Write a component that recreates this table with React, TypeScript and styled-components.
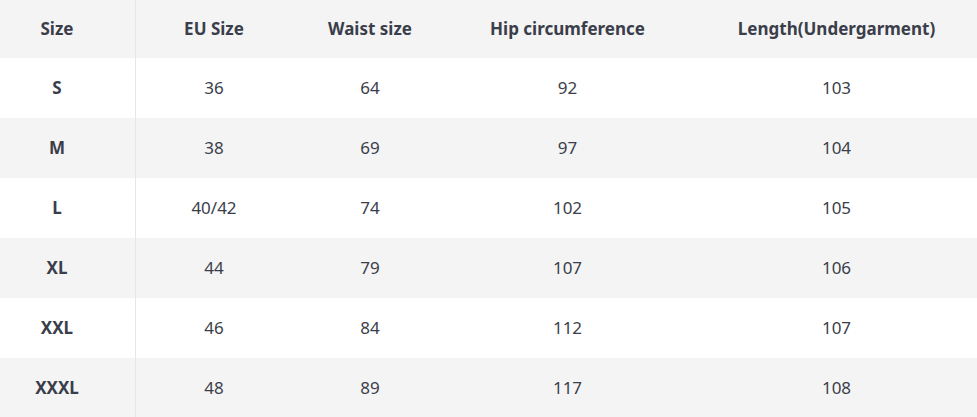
import styled, { createGlobalStyle } from 'styled-components'

const GlobalStyle = createGlobalStyle`
  html, body {
    margin: 0;
    padding: 0;
    background: #fff;
  }
  body {
    font-family: 'Noto Sans', 'Open Sans', sans-serif;
    color: #3a3e4a;
    overflow: hidden;
  }
`

const columns = ['Size', 'EU Size', 'Waist size', 'Hip circumference', 'Length(Undergarment)']

const rows = [
  ['S', '36', '64', '92', '103'],
  ['M', '38', '69', '97', '104'],
  ['L', '40/42', '74', '102', '105'],
  ['XL', '44', '79', '107', '106'],
  ['XXL', '46', '84', '112', '107'],
  ['XXXL', '48', '89', '117', '108'],
]

const Table = styled.div`
  display: grid;
  grid-template-columns: 136px 156px 156px 239px 299px;
  width: 986px;
`

const Row = styled.div<{ $shaded: boolean; $head?: boolean }>`
  display: contents;

  & > div {
    background: ${(p) => (p.$shaded ? '#f4f4f4' : '#ffffff')};
    height: ${(p) => (p.$head ? '58px' : '60px')};
  }
`

const Cell = styled.div<{ $bold?: boolean; $first?: boolean }>`
  display: flex;
  align-items: center;
  justify-content: center;
  box-sizing: border-box;
  font-size: 17px;
  font-weight: ${(p) => (p.$bold ? 700 : 400)};
  padding-right: ${(p) => (p.$first ? '21px' : '0')};
  padding-bottom: 1px;
  border-right: ${(p) => (p.$first ? '1px solid #e6e6e6' : 'none')};
  white-space: nowrap;
`

export default function App() {
  return (
    <>
      <GlobalStyle />
      <Table>
        <Row $shaded $head>
          {columns.map((c, i) => (
            <Cell key={c} $bold $first={i === 0}>
              {c}
            </Cell>
          ))}
        </Row>
        {rows.map((r, ri) => (
          <Row key={r[0]} $shaded={ri % 2 === 1}>
            {r.map((v, i) => (
              <Cell key={i} $bold={i === 0} $first={i === 0}>
                {v}
              </Cell>
            ))}
          </Row>
        ))}
      </Table>
    </>
  )
}
